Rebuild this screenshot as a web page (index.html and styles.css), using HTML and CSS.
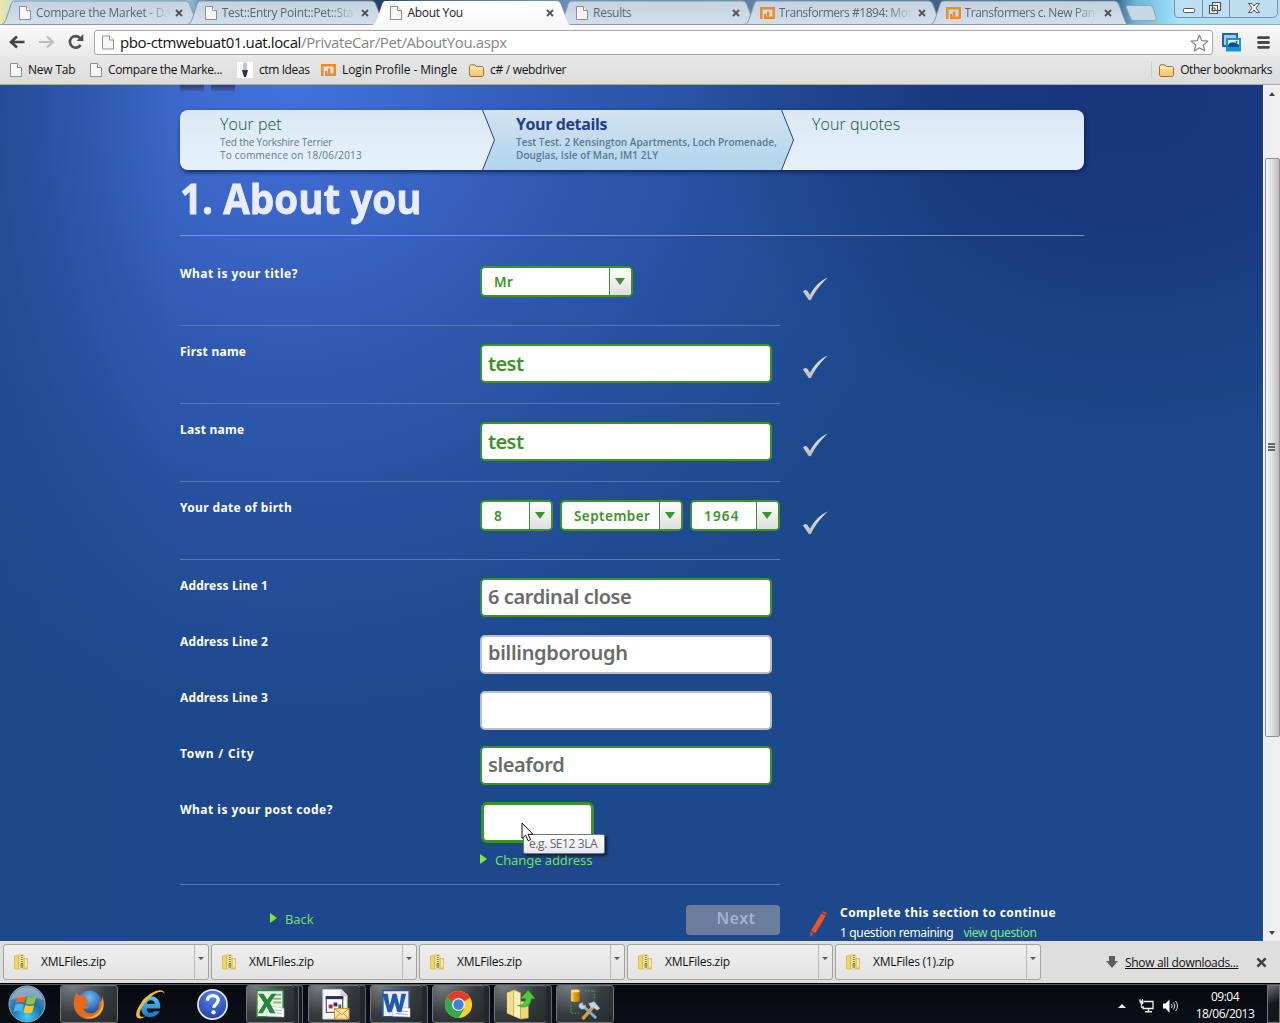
FILE: index.html
```html
<!DOCTYPE html>
<html lang="en">
<head>
<meta charset="utf-8">
<title>About You</title>
<link rel="stylesheet" href="styles.css">
</head>
<body>
<svg class="defs" width="0" height="0" aria-hidden="true">
  <defs>
    <linearGradient id="gTab" x1="0" y1="0" x2="0" y2="1"><stop offset="0" stop-color="#c3d3e3"/><stop offset="1" stop-color="#d3dfe9"/></linearGradient>
    <linearGradient id="gActive" x1="0" y1="0" x2="0" y2="1"><stop offset="0" stop-color="#fff"/><stop offset="1" stop-color="#f8f8f8"/></linearGradient>
    <linearGradient id="gStep" x1="0" y1="0" x2="0" y2="1"><stop offset="0" stop-color="#dbe8f3"/><stop offset="1" stop-color="#e6f2fb"/></linearGradient>
    <linearGradient id="gStepOn" x1="0" y1="0" x2="0" y2="1"><stop offset="0" stop-color="#d3e3f1"/><stop offset="1" stop-color="#b1d4ec"/></linearGradient>
    <linearGradient id="gTick" x1="0" y1="0" x2="0" y2="1"><stop offset="0" stop-color="#e8e8e8"/><stop offset="1" stop-color="#bdbdbd"/></linearGradient>
    <linearGradient id="gFolder" x1="0" y1="0" x2="0" y2="1"><stop offset="0" stop-color="#ffe9ae"/><stop offset="1" stop-color="#f9c464"/></linearGradient>
    <linearGradient id="gGold" x1="0" y1="0" x2="1" y2="0"><stop offset="0" stop-color="#f9dc7c"/><stop offset=".4" stop-color="#e0a21c"/><stop offset="1" stop-color="#b87a08"/></linearGradient>
    <radialGradient id="gOrb" cx=".5" cy=".85" r=".8"><stop offset="0" stop-color="#3fd0f5"/><stop offset=".5" stop-color="#1e6fa8"/><stop offset="1" stop-color="#6d93b0"/></radialGradient>
    <radialGradient id="gHelp" cx=".5" cy=".25" r=".8"><stop offset="0" stop-color="#5d83e0"/><stop offset="1" stop-color="#1d3ea8"/></radialGradient>
    <radialGradient id="gGlobe" cx=".5" cy=".3" r=".7"><stop offset="0" stop-color="#6fc0f0"/><stop offset="1" stop-color="#13439a"/></radialGradient>
    <linearGradient id="gIe" x1="0" y1="0" x2="0" y2="1"><stop offset="0" stop-color="#58c4f8"/><stop offset="1" stop-color="#1277cc"/></linearGradient>
    <symbol id="page" viewBox="0 0 12 14"><path d="M.5.5h7l4 4v9H.5z" fill="#f6f6f6" stroke="#8e8e8e"/><path d="M7.500.5v4h4" fill="#fff" stroke="#8e8e8e"/></symbol>
    <symbol id="mingle" viewBox="0 0 15 12"><path fill="#f28a1e" fill-rule="evenodd" d="M0 0h15v12H6V9.500h6.500v-7h-10V12H0z"/><path d="M4 12V7h2.300v5zM7 4.500h2.300v5H7z" fill="#f28a1e"/></symbol>
    <symbol id="folder" viewBox="0 0 15 13"><path d="M.5 11V2.500L1.500.8h4.500l1.200 1.700h6.300l1 1V11.500l-1 1H1.500z" fill="url(#gFolder)" stroke="#a8702c"/><path d="M1.500 4h12" stroke="#fff2c8"/></symbol>
    <symbol id="close" viewBox="0 0 8 8"><path d="M1 1l6 6M7 1L1 7" stroke="currentColor" stroke-width="1.900"/></symbol>
    <symbol id="tick" viewBox="0 0 26 24"><path d="M0 14.500c1.200-1.700 2.600-2 4.200-.8l2.800 4C11 10.500 17.500 3 25 .5 18.500 5.800 12.500 13.800 8.300 22.200c-.8 1.200-2.300 1.200-2.900.2z" fill="url(#gTick)"/></symbol>
    <symbol id="zip" viewBox="0 0 15 16"><path d="M.5 2L5 1v14H.5z" fill="#f0d667" stroke="#c9a738" stroke-width=".6"/><path d="M5 1h5v14H5z" fill="#f9eda5" stroke="#d2b650" stroke-width=".6"/><path d="M10 4.500h3.500V15H10z" fill="#f3da6e" stroke="#c9a738" stroke-width=".6"/><path d="M7.800 1v9" stroke="#777" stroke-width="2" stroke-dasharray="1 1"/><path d="M6.800 10h2v3.500h-2z" fill="#aaa" stroke="#777" stroke-width=".6"/><path d="M12 6v6" stroke="#fff" stroke-width="1"/></symbol>
    <symbol id="inactiveTab" viewBox="0 0 198 25"><path d="M.5 24.500C3.500 23.500 4.500 21 5.500 18L9.500 6C10.500 2.500 11.500 1 14 1h170c3 0 4 1.500 5 4l5.500 14.500c1 3 2 4.500 3 5z" fill="url(#gTab)" stroke="#8799aa"/></symbol>
    <symbol id="activeTab" viewBox="0 0 198 25"><path d="M0 25c3-1 4.500-4 5.500-7L9.500 6C10.500 2.500 11.500 1 14 1h170c3 0 4 1.500 5 4l5.500 14.500c1 3 2 5 3.500 5.500z" fill="url(#gActive)"/></symbol>
  </defs>
</svg>
<div class="screen">
  <header class="tabstrip">
    <div class="tab"><svg class="shape"><use href="#inactiveTab"/></svg><svg class="ico"><use href="#page"/></svg><span class="name fade">Compare the Market - Da</span><svg class="x"><use href="#close"/></svg></div>
    <div class="tab"><svg class="shape"><use href="#inactiveTab"/></svg><svg class="ico"><use href="#page"/></svg><span class="name fade">Test::Entry Point::Pet::Sta</span><svg class="x"><use href="#close"/></svg></div>
    <div class="tab active"><svg class="shape"><use href="#activeTab"/></svg><svg class="ico"><use href="#page"/></svg><span class="name">About You</span><svg class="x"><use href="#close"/></svg></div>
    <div class="tab"><svg class="shape"><use href="#inactiveTab"/></svg><svg class="ico"><use href="#page"/></svg><span class="name">Results</span><svg class="x"><use href="#close"/></svg></div>
    <div class="tab"><svg class="shape"><use href="#inactiveTab"/></svg><svg class="ico wide"><use href="#mingle"/></svg><span class="name fade tight">Transformers #1894: Mor</span><svg class="x"><use href="#close"/></svg></div>
    <div class="tab"><svg class="shape"><use href="#inactiveTab"/></svg><svg class="ico wide"><use href="#mingle"/></svg><span class="name fade tight">Transformers c. New Pan</span><svg class="x"><use href="#close"/></svg></div>
    <svg class="newtab" viewBox="0 0 32 16"><path d="M3.500.5h21c2 0 3 1 3.500 2.500l3 9.500c.5 2-.5 3-2 3H9c-2 0-3-1-3.500-2.500L1.500 3C1 1.500 2 .5 3.500.5z" fill="#c5d8e4" stroke="#8ba6b8"/></svg>
    <div class="winbtns">
      <svg viewBox="0 0 104 18"><path d="M.5 0v13c0 3 1.500 4.500 4 4.500h94c3 0 5-2 5-4.500V0M28.500 0v17M55.500 0v17" fill="none" stroke="#7891a5"/><rect x="9.500" y="8.500" width="11" height="4" rx="1" fill="#fff" stroke="#4c5866"/><path d="M38.500 2.500h8v8h-8zM35.500 5.500h8v8h-8z" fill="#fff" stroke="#4c5866" stroke-width="1.200"/><path d="M38 8h3v3h-3z" fill="none" stroke="#4c5866"/><path d="M74.500 3.500h3.500l2 2.500 2-2.500h3.500l-3.600 4.500 3.600 4.500H82l-2-2.500-2 2.500h-3.500L78.100 8z" fill="#fff" stroke="#4c5866"/></svg>
    </div>
  </header>
  <div class="toolbar">
    <svg class="nav back" viewBox="0 0 16 14"><path d="M15.500 7H3M8 1.500L2 7l6 5.500" fill="none" stroke="#444" stroke-width="2.600"/></svg>
    <svg class="nav fwd" viewBox="0 0 16 14"><path d="M0 7h12M8 1.500L14 7l-6 5.500" fill="none" stroke="#bcbcbc" stroke-width="2.200"/></svg>
    <svg class="nav reload" viewBox="0 0 16 16"><path d="M12.600 11A5.800 5.800 0 1 1 12 4" fill="none" stroke="#505050" stroke-width="2.600"/><path d="M15.300 0v7H8.500z" fill="#505050"/></svg>
    <div class="omnibox">
      <svg class="doc"><use href="#page"/></svg>
      <span class="url"><b>pbo-ctmwebuat01.uat.local</b>/PrivateCar/Pet/AboutYou.aspx</span>
      <svg class="star" viewBox="0 0 19 18"><path d="M9.500 1.200l2.300 5.500 6 .5-4.500 3.900 1.400 5.900-5.200-3.200L4.300 17l1.400-5.900L1.200 7.200l6-.5z" fill="#fff" stroke="#858585" stroke-width="1.200" stroke-linejoin="round"/></svg>
    </div>
    <svg class="ext" viewBox="0 0 20 19"><rect x="1" y="1" width="14" height="12" fill="#a9cbe1" stroke="#1e679b" stroke-width="2"/><rect x="4" y="5" width="15" height="13.500" fill="#1794d8"/><path d="M6 7h11v7H6z" fill="#d6ecfa"/><path d="M6 14v-2c3-4 7-3 11 0v2z" fill="#075384"/><circle cx="14.500" cy="9" r="1" fill="#075384"/></svg>
    <svg class="menu" viewBox="0 0 13 13"><path d="M1.500 1.700h10M1.500 6.500h10M1.500 11.300h10" stroke="#484848" stroke-width="2.800" stroke-linecap="round"/></svg>
  </div>
  <div class="bookmarks">
    <div class="bm b1"><svg class="pg"><use href="#page"/></svg><span>New Tab</span></div>
    <div class="bm b2"><svg class="pg"><use href="#page"/></svg><span>Compare the Marke...</span></div>
    <div class="bm b3"><svg class="fav" viewBox="0 0 16 16"><path d="M0 0h16v16H0z" fill="#fff"/><path d="M6 1c1-1 3-1 4 0v8H6z" fill="#b9c4d4"/><path d="M5 8h6l-1 4-1 3H7l-1-3z" fill="#25345c"/></svg><span>ctm Ideas</span></div>
    <div class="bm b4"><svg class="mg"><use href="#mingle"/></svg><span>Login Profile - Mingle</span></div>
    <div class="bm b5"><svg class="fd"><use href="#folder"/></svg><span>c# / webdriver</span></div>
    <div class="bm other"><svg class="fd"><use href="#folder"/></svg><span>Other bookmarks</span></div>
  </div>

  <div class="viewport">
    <main class="page">
      <div class="logo"><i></i><i></i></div>
      <div class="steps">
        <svg class="stepsbg" viewBox="0 0 904 60"><rect width="904" height="60" rx="8" fill="url(#gStep)"/><path d="M302.500 0H601.500L613.500 30 601.500 60H302.500L314.500 30z" fill="url(#gStepOn)"/><path d="M302.500 0l12 30-12 30M601.500 0l12 30-12 30" fill="none" stroke="#2c3f78" stroke-width="1"/></svg>
        <div class="step"><h2>Your pet</h2><p><span class="p1">Ted the Yorkshire Terrier</span><br><span class="p2">To commence on 18/06/2013</span></p></div>
        <div class="step on"><h2>Your details</h2><p><span>Test Test. 2 Kensington Apartments, Loch Promenade,</span><br><span class="p4">Douglas, Isle of Man, IM1 2LY</span></p></div>
        <div class="step last"><h2>Your quotes</h2></div>
      </div>
      <h1><span>1. About you</span></h1>

      <section class="question first">
        <label class="wide">What is your title?</label>
        <div class="selects"><div class="select w153"><span>Mr</span><i></i></div></div>
        <svg class="tick"><use href="#tick"/></svg>
      </section>
      <section class="question">
        <label>First name</label>
        <div class="input ok done">test</div>
        <svg class="tick"><use href="#tick"/></svg>
      </section>
      <section class="question">
        <label>Last name</label>
        <div class="input ok done">test</div>
        <svg class="tick"><use href="#tick"/></svg>
      </section>
      <section class="question">
        <label class="dob">Your date of birth</label>
        <div class="selects"><div class="select w73"><span>8</span><i></i></div><div class="select w123"><span>September</span><i></i></div><div class="select w90"><span class="year">1964</span><i></i></div></div>
        <svg class="tick"><use href="#tick"/></svg>
      </section>
      <section class="address">
        <div class="line"><label class="al">Address Line 1</label><div class="input ok">6 cardinal close</div></div>
        <div class="line"><label class="al">Address Line 2</label><div class="input plain">billingborough</div></div>
        <div class="line"><label class="al">Address Line 3</label><div class="input plain"></div></div>
        <div class="line"><label class="town">Town / City</label><div class="input ok">sleaford</div></div>
        <div class="line post"><label class="wide">What is your post code?</label>
          <div class="postfield">
            <div class="postcode"></div>
            <a class="link change"><i></i><span>Change address</span></a>
            <div class="tooltip">e.g. SE12 3LA</div>
            <svg class="cursor" viewBox="0 0 13 20"><path d="M1 1v15.500l3.600-3.300 2.500 5.600 2.500-1.100-2.500-5.400H12z" fill="#fff" stroke="#111"/></svg>
          </div>
        </div>
      </section>
      <div class="actions">
        <a class="link backlink"><i></i><span>Back</span></a>
        <button class="next" type="button">Next</button>
        <svg class="pencil" viewBox="0 0 18 26"><path d="M12.300 2.500l4.500 2.300L6.500 22l-4.500-2.500z" fill="#f0522b"/><path d="M13 1.600L14 .3l3.700 1.500-.5 2zM1.500 20.700l3.500 2-4.300 3z" fill="#d9482a"/></svg>
        <div class="remain"><strong>Complete this section to continue</strong><p><span>1 question remaining</span><a>view question</a></p></div>
      </div>
    </main>
    <div class="scrollbar"><i class="up"></i><div class="thumb"><i></i><i></i><i></i></div><i class="down"></i></div>
  </div>

  <div class="downloads">
    <div class="dl"><svg class="zip"><use href="#zip"/></svg><span>XMLFiles.zip</span><b></b></div>
    <div class="dl"><svg class="zip"><use href="#zip"/></svg><span>XMLFiles.zip</span><b></b></div>
    <div class="dl"><svg class="zip"><use href="#zip"/></svg><span>XMLFiles.zip</span><b></b></div>
    <div class="dl"><svg class="zip"><use href="#zip"/></svg><span>XMLFiles.zip</span><b></b></div>
    <div class="dl"><svg class="zip"><use href="#zip"/></svg><span>XMLFiles (1).zip</span><b></b></div>
    <svg class="dlarrow" viewBox="0 0 12 12"><path d="M3 0h6v5h3l-6 7-6-7h3z" fill="#5c5c5c"/></svg>
    <a class="showall">Show all downloads...</a>
    <svg class="dlclose"><use href="#close"/></svg>
  </div>

  <footer class="taskbar">
    <div class="task start"><svg viewBox="0 0 38 38"><circle cx="19" cy="19" r="18" fill="url(#gOrb)" stroke="#8fb4c9"/><path d="M9.500 11.500c3-2 6-1.800 8.500-.5l-1.800 7c-3-1.300-5.500-1.200-8.500.3z" fill="#f0612a"/><path d="M19.500 11.500c3 1.300 5.500 1.300 8.800-.3l-1.900 7.300c-3 1.500-5.800 1.400-8.700.1z" fill="#8fc63f"/><path d="M7.300 19.700c3-1.500 5.800-1.500 8.500-.2L14 26.800c-3-1.300-5.500-1.300-8.500.3z" fill="#4cb4ea"/><path d="M17.300 20c3 1.400 5.800 1.400 8.700 0l-1.900 7.200c-3 1.500-5.800 1.400-8.600.1z" fill="#fcc928"/><path d="M3 15A16.500 16.500 0 0 1 35 15Q19 8 3 15z" fill="#fff" opacity=".28"/></svg></div>
    <div class="task open"><svg viewBox="0 0 34 34"><circle cx="18" cy="15" r="12.500" fill="url(#gGlobe)"/><path d="M5 5c-4 6-4.500 14-.5 20C9 32 18 34 25 30c8-5 9.500-14 6-22 0 4-1 6-3 7 1 7-4 12-10 11-4-.5-6-3-6.500-5 3 1 5 0 6.500-2-3-.2-4.500-1-5-3 1-1 3.500-.8 4.500-2.500-2-.8-3.500-2-3-4.500L9.500 8C7 7.500 5.500 7 5 5z" fill="#e8691b"/><path d="M11 29c6 3 13 0 17-5 3-4 4-9 3-14 3 8 1 15-5 19-5 3-10 3-15 0z" fill="#fbb62c"/></svg></div>
    <div class="task ie"><svg viewBox="0 0 34 34"><path d="M26.500 24c-2 4-5.500 6-9.700 6C10.500 30 7 25.500 7 19.500 7 13 11 8.500 17 8.500c7 0 10.500 5 10 12.500H13c.2 3 1.600 4.600 4.200 4.600 1.500 0 2.700-.6 3.300-1.600zm-5-7.500c-.2-2.600-1.600-4-4-4s-4 1.400-4.400 4z" fill="url(#gIe)"/><path d="M31.500 6.500C31.500-.5 20 1.500 11 11 3 19.500 0 29 4 31c2 1 5 0 8-2-4 1.500-7 1-6-4 1.500-6.500 8.500-15 15.500-19 5-3 9-3 10 .5z" fill="#f2bd2c"/></svg></div>
    <div class="task"><svg viewBox="0 0 34 34"><circle cx="17" cy="17" r="15" fill="url(#gHelp)" stroke="#dfe5f3" stroke-width="1.800"/><path d="M11.700 13c.3-3.300 2.400-5.200 5.600-5.200 3.300 0 5.500 1.900 5.500 4.700 0 4-4.500 4.400-4.500 7.900" fill="none" stroke="#fff" stroke-width="3.400"/><circle cx="18" cy="25" r="2.200" fill="#fff"/></svg></div>
    <div class="task open stack2"><svg viewBox="0 0 34 34"><path d="M3 2.500h27v27H3z" fill="#eaf5e6" stroke="#2e8b3d" stroke-width="1.500"/><path d="M20 7h8M20 11h8M20 15h8" stroke="#84bb84" stroke-width="2"/><path d="M14 18l17 3v9l-18-1z" fill="#fff" stroke="#aaa" stroke-width=".5"/><path d="M16 22l13 1.500M16 25l13 1.500" stroke="#9fc49f"/><path d="M4 6h6l3.500 6L18 6h5l-6.500 9.500L22 26h-5.500L13 19l-4 7H4l6.500-10.500z" fill="#28863a"/></svg></div>
    <div class="task open stack1"><svg viewBox="0 0 34 34"><path d="M5 1.500h19l6 6V32H5z" fill="#f7f7f7" stroke="#ccc"/><path d="M24 1.500v6h6" fill="#ddd" stroke="#bbb"/><rect x="8.500" y="9" width="17" height="16" fill="#fff" stroke="#26336b"/><path d="M8 8.500h18v3H8z" fill="#26336b"/><path d="M11 17h4v4h-4z" fill="#c23"/><path d="M16 15h4v4h-4z" fill="#2a2d8d"/><path d="M21 17h3v4h-3z" fill="#282"/><path d="M17 21h15v11H17z" fill="#f9e2a0" stroke="#c58f2c"/><path d="M17 21l7.500 6.500L32 21M17 32l6-6M32 32l-6-6" fill="none" stroke="#c58f2c"/></svg></div>
    <div class="task open stack1"><svg viewBox="0 0 34 34"><path d="M3 2.500h27v27H3z" fill="#e6eefb" stroke="#2b579a" stroke-width="1.500"/><path d="M14 18l17 3v9l-18-1z" fill="#fff" stroke="#aaa" stroke-width=".5"/><path d="M16 23l13 1.500M16 26l13 1.500" stroke="#9ab"/><path d="M2.500 6H8l2 12 3-12h4l3 12L22 6h5l-5 19h-4l-3-10-3 10H8z" fill="#2257ad"/></svg></div>
    <div class="task open stack1"><svg viewBox="0 0 34 34"><circle cx="17" cy="17" r="14" fill="#fbcf2b"/><path d="M17 17L4.900 10A14 14 0 0 0 17 31l6-10z" fill="#35a853"/><path d="M17 17L4.900 10A14 14 0 0 1 29.100 10z" fill="#e33b2e"/><circle cx="17" cy="17" r="6.700" fill="#f4f4f4"/><circle cx="17" cy="17" r="5.300" fill="#3f7fd6"/></svg></div>
    <div class="task open stack1"><svg viewBox="0 0 34 34"><path d="M3 5l7-3v27l-7-3z" fill="#f1dd8c"/><path d="M10 2l7 3v27l-7-3z" fill="#fbf0ba" stroke="#c9ac4a" stroke-width=".6"/><path d="M17 14h8v17l-8 1z" fill="#efd67c" stroke="#c9ac4a" stroke-width=".6"/><path d="M14 18c6 0 8-3 8-7h-5l8-9 7 9h-4c0 7-6 11-14 7z" fill="#4ccb3e" stroke="#23902b" stroke-width=".6"/></svg></div>
    <div class="task open"><svg viewBox="0 0 34 34"><path d="M3 3v10c0 2 9 2 9 0V3z" fill="url(#gGold)"/><ellipse cx="7.500" cy="3" rx="4.500" ry="1.500" fill="#fbe08d"/><path d="M18 3h9v10M3 18v8h9" fill="none" stroke="#37b53b" stroke-width="1.200" stroke-dasharray="1.500 1.500"/><path d="M15 32l12-14" stroke="#d69c38" stroke-width="3.500"/><path d="M15 18l14 13" stroke="#8ca8c8" stroke-width="3"/><path d="M12 16l3-1 .5 3 3-.5-1 4-4 .5-2.500-3zM21 16l6-2 6 7-3 2-4-3-2 1z" fill="#c7d3e2" stroke="#7890ad" stroke-width=".5"/></svg></div>
    <div class="tray">
      <i class="caret"></i>
      <svg class="net" viewBox="0 0 15 14"><path d="M5 2.500h9v7H4V7" fill="none" stroke="#eee" stroke-width="1.300"/><path d="M9.500 10v2.500M6 12.800h7" stroke="#eee" stroke-width="1.500"/><path d="M0 1.500h4.500v3L2.300 6z" fill="#eee"/><path d="M1 0v2M3.500 0v2M2.300 5v3.500h2" fill="none" stroke="#eee"/></svg>
      <svg class="vol" viewBox="0 0 15 14"><path d="M0 4.500h2.500L6.500.5v13L2.500 9.500H0z" fill="#fff"/><path d="M8.500 5q1.500 2 0 4M10.500 3.500q2.700 3.500 0 7M12.500 2q4 5 0 10" fill="none" stroke="#ddd"/></svg>
      <div class="clock"><span>09:04</span><span>18/06/2013</span></div>
      <div class="peek"></div>
    </div>
  </footer>
</div>
</body>
</html>
```
FILE: styles.css
```css
* { box-sizing: border-box; }
body { margin: 0; overflow: hidden; font: 12px "Open Sans", "Noto Sans", sans-serif; color: #111; }
.defs { position: absolute; }
.screen { width: 1280px; height: 1023px; display: flex; flex-direction: column; overflow: hidden; white-space: nowrap; }
svg { display: block; flex: none; }
i { display: block; flex: none; }
h1, h2, p { margin: 0; }

/* Tab strip */
.tabstrip { height: 25px; display: flex; position: relative; padding-left: 1px; border-bottom: 1px solid #9aa6b0;
  background: linear-gradient(90deg, #f2e7a0 0, #b5dcea 16px, #8fbad0 190px, #4d6f96 210px, #27415f 380px, #53779c 440px, #6d8fb5 560px, #5f7fa3 760px, #3f6288 940px, #2d4a70 1110px, #6ab4dc 1135px, #a4e6fa 1180px, #b9dcf2 1280px); }
.tab { width: 198px; margin-right: -12.300px; height: 25px; flex: none; position: relative; display: flex; align-items: center; padding-left: 18px; color: #5b6772; }
.tab.active { z-index: 2; color: #222; }
.shape { position: absolute; left: 0; top: 0; width: 198px; height: 25px; }
.ico { position: relative; width: 12px; height: 14px; margin-right: 5px; }
.ico.wide { width: 15px; height: 12px; margin: 0 4px 0 -2px; }
.name { position: relative; width: 134px; letter-spacing: -.3px; }
.tight { letter-spacing: -.45px; }
.fade { -webkit-mask-image: linear-gradient(90deg, #000 108px, transparent 134px); mask-image: linear-gradient(90deg, #000 108px, transparent 134px); }
.tab .x { position: relative; width: 8px; height: 8px; margin-left: 5px; color: #555; }
.newtab { width: 32px; height: 16px; margin: 5px 0 0 10px; }
.winbtns { position: absolute; left: 1174px; top: 0; width: 104px; height: 18px; background: #c4ddedaa; border-radius: 0 0 5px 5px; }
.winbtns svg { width: 104px; height: 18px; }

/* Toolbar */
.toolbar { height: 32px; display: flex; align-items: center; padding-left: 9px; background: linear-gradient(#f9f9f9, #e9e9e9); }
.nav { margin-top: 2px; }
.back, .fwd { width: 16px; height: 14px; }
.fwd { margin-left: 14px; }
.reload { width: 16px; height: 16px; margin-left: 13px; }
.omnibox { width: 1119px; height: 25px; margin: 3px 0 0 10px; border: 1px solid #a5a5a5; border-radius: 3px; background: #fff; display: flex; align-items: center; padding: 0 3px 0 7px; }
.doc { width: 12px; height: 15px; margin-right: 6px; }
.url { flex: 1; font-size: 15px; color: #858585; letter-spacing: -.39px; line-height: 21px; }
.url b { font-weight: 400; color: #111; }
.star { width: 19px; height: 18px; }
.ext { width: 20px; height: 19px; margin: 2px 0 0 9px; }
.menu { width: 13px; height: 13px; margin: 2px 0 0 15px; }

/* Bookmarks bar */
.bookmarks { height: 28px; position: relative; display: flex; align-items: center; padding: 0 8px 1px 10px; border-bottom: 1px solid #a8a8a8; background: linear-gradient(#e7e7e7, #dcdcdc); letter-spacing: -.2px; }
.bm { display: flex; align-items: center; }
.bm span { padding-bottom: 1px; }
.bm svg { margin-right: 6px; }
.pg { width: 12px; height: 14px; }
.fav { width: 16px; height: 16px; }
.mg { width: 15px; height: 12px; }
.fd { width: 15px; height: 13px; }
.b1 { width: 80px; } .b2 { width: 147px; letter-spacing: -.35px; } .b3 { width: 84px; letter-spacing: -.4px; } .b4 { width: 148px; letter-spacing: -.1px; } .b5 { letter-spacing: -.3px; }
.other { margin-left: auto; padding-left: 7px; border-left: 1px solid #cfcfcf; letter-spacing: -.45px; }

/* Web page */
.viewport { height: 856px; display: flex; overflow: hidden;
  background: linear-gradient(90deg, #1c478899 0, #1c478800 170px), radial-gradient(ellipse 430px 360px at 1130px 0, #18347a, #18347acc 35%, #18347a00), radial-gradient(ellipse 660px 640px at 290px 0, #4470dc 0, #3c66c7 20%, #315bb3 40%, #27519f 65%, #1d488b00 100%), #1d488b; }
.page { width: 904px; margin: 0 179px 0 180px; flex: none; color: #fff; }
.logo { height: 25px; display: flex; gap: 7px; }
.logo i { width: 24px; height: 6px; background: linear-gradient(#2d3c66, #2d3c6633); }
.steps { position: relative; height: 60px; display: flex; border-radius: 8px; box-shadow: 1px 2px 4px #0d235e; }
.stepsbg { position: absolute; inset: 0; width: 904px; height: 60px; }
.step { position: relative; width: 296px; padding: 4px 0 0 40px; }
.step h2 { font: 300 16px/21px "Open Sans", sans-serif; color: #10503f; letter-spacing: .05px; }
.step p { font-size: 10px; line-height: 13px; color: #60798f; margin-top: 1px; }
.step.on h2 { font-weight: 700; color: #213e86; letter-spacing: -.4px; }
.step.on p { font-weight: 600; color: #587791; }
.p1 { letter-spacing: -.15px; }
.p2 { letter-spacing: .24px; }
.p4 { letter-spacing: .08px; }
h1 { height: 66px; border-bottom: 1px solid #7b98cc; font: 700 42px/56px "Open Sans", sans-serif; color: #e9ecfa; }
h1 span { display: inline-block; transform: scaleX(.92); transform-origin: 0 0; -webkit-text-stroke: .8px #e9ecfa; }
.question { width: 600px; height: 78px; padding-top: 18px; display: grid; grid-template-columns: 300px 323px 26px; align-items: start; border-bottom: 1px solid #5379b8; }
.question.first { height: 90px; padding-top: 30px; }
label { font: 700 12px/15px "Noto Sans", sans-serif; letter-spacing: .25px; }
label.wide { letter-spacing: .48px; }
label.dob { letter-spacing: .35px; }
label.al { letter-spacing: .13px; }
label.town { letter-spacing: .75px; }
.tick { width: 26px; height: 24px; margin-top: 11px; }
.input { width: 292px; height: 39px; border: 2px solid #b9bdc6; border-radius: 5px; background: #fff; padding-left: 6px; font: 600 20px/34px "Noto Sans", sans-serif; color: #686b68; letter-spacing: -.4px; }
.input.plain { margin-top: 1px; line-height: 32px; letter-spacing: -.3px; }
.input.ok { border-color: #3b9428; }
.input.done { color: #3b9428; line-height: 35px; letter-spacing: -.6px; }
.selects { display: flex; justify-content: space-between; width: 300px; }
.select { height: 31px; display: flex; justify-content: space-between; border: 2px solid #3b9428; border-radius: 5px; background: #fff; overflow: hidden; padding-left: 12px; font: 600 13.500px/28px "Noto Sans", sans-serif; letter-spacing: .45px; color: #3b9428; }
.select .year { letter-spacing: 1.2px; }
.select i { width: 22px; border-left: 1px solid #3b9428; background: linear-gradient(#fff, #dedede); padding: 10px 0 0 5px; }
.select i::after { content: ""; display: block; width: 0; border: 5.500px solid transparent; border-top: 7px solid #3b9428; border-bottom: 0; }
.w153 { width: 153px; } .w73 { width: 73px; } .w123 { width: 123px; } .w90 { width: 90px; }
.address { width: 600px; height: 325px; padding-top: 18px; border-bottom: 1px solid #5379b8; }
.line { height: 56px; display: grid; grid-template-columns: 300px 300px; align-items: start; }
.postfield { position: relative; }
.postcode { width: 113px; height: 41px; margin-left: 1px; border: 3px solid #3b9428; border-radius: 6px; background: #fff; }
.link { display: flex; align-items: center; color: #74dc62; font: 13px/18px "Noto Sans", sans-serif; letter-spacing: -.08px; }
.link i { border: 5px solid transparent; border-left: 7px solid #84e62f; border-right: 0; margin: -3px 8px 0 0; }
.change { margin-top: 8px; }
.tooltip { position: absolute; left: 43px; top: 32px; width: 82px; height: 20px; border: 1px solid #777; border-radius: 2px; background: linear-gradient(#fff, #e5e6f0); box-shadow: 2px 2px 3px #0009; color: #666; font-size: 12px; line-height: 18px; padding-left: 5px; letter-spacing: -.4px; }
.cursor { position: absolute; left: 41px; top: 20px; width: 13px; height: 20px; }
.actions { height: 60px; width: 904px; display: flex; align-items: flex-start; }
.backlink { margin: 25px 0 0 90px; width: 416px; }
.next { width: 94px; height: 30px; margin-top: 20px; padding: 0 0 5px 6px; border: 0; border-radius: 4px; background: #6a7d9c; color: #a3b3d3; font: 600 16px "Noto Sans", sans-serif; letter-spacing: .5px; }
.pencil { width: 18px; height: 26px; margin: 26px 0 0 29px; }
.remain { margin: 18px 0 0 13px; font: 12px/20px "Noto Sans", sans-serif; }
.remain strong { display: block; letter-spacing: .43px; }
.remain p { letter-spacing: -.35px; }
.remain a { color: #86e389; margin-left: 10px; }
.scrollbar { width: 17px; height: 856px; background: #efefef; border-left: 1px solid #fff; display: flex; flex-direction: column; align-items: center; }
.up, .down { border: 3.500px solid transparent; }
.up { border-bottom: 4px solid #444; border-top: 0; margin: 7px 0 62px; }
.down { border-top: 4px solid #444; border-bottom: 0; margin-top: 194px; }
.thumb { width: 15px; height: 579px; border: 1px solid #8f9094; border-radius: 2px; background: linear-gradient(90deg, #f7f7f7, #e2e2e4 45%, #b9b9bc); display: flex; flex-direction: column; align-items: center; justify-content: center; gap: 1px; padding: 0 2px 2px 0; }
.thumb i { width: 7px; height: 2px; background: #666; }

/* Downloads shelf */
.downloads { height: 43px; padding: 3px 0 0 3px; display: flex; align-items: flex-start; gap: 2px; background: #dedede; }
.dl { width: 206px; height: 36px; flex: none; display: flex; align-items: center; padding-left: 10px; border: 1px solid #a3a3a3; border-radius: 3px; background: linear-gradient(#eee, #e3e3e3); letter-spacing: -.25px; }
.dl span { padding-bottom: 1px; }
.zip { width: 15px; height: 16px; margin-right: 12px; }
.dl b { margin-left: auto; width: 14px; height: 34px; border-left: 1px solid #bbb; padding: 12px 0 0 3px; }
.dl b::after { content: ""; display: block; width: 0; border: 3px solid transparent; border-top-color: #555; border-bottom: 0; }
.dlarrow { width: 12px; height: 12px; margin: 12px 5px 0 63px; }
.showall { text-decoration: underline; line-height: 37px; letter-spacing: -.32px; width: 114px; }
.dlclose { width: 11px; height: 11px; margin: 13px 0 0 15px; color: #444; }

/* Taskbar */
.taskbar { height: 39px; display: flex; align-items: center; border-top: 1px solid #50565c; box-shadow: 0 -1px #000; background: linear-gradient(#060a0e, #0b0f18); position: relative; }
.task { width: 58px; height: 38px; margin-right: 4px; flex: none; display: flex; align-items: center; justify-content: center; }
.task svg { width: 33px; height: 33px; margin-right: 1px; }
.start { width: 56px; }
.task.start svg { width: 38px; height: 38px; margin-right: 2px; }
.task.open { border: 1px solid #72777b; border-radius: 3px; background: radial-gradient(ellipse at 20% 0, #777c80, #363b3e 55%, #23282b); }
.stack1, .stack2 { position: relative; }
.task.stack1, .task.stack2 { width: 53px; margin-right: 9px; }
.stack1::after, .stack2::after { content: ""; position: absolute; right: -6px; top: -1px; width: 5px; height: 38px; border: 1px solid #5f6468; border-left: 0; border-radius: 0 3px 3px 0; background: #22272a; }
.task.stack2 { width: 49px; margin-right: 13px; }
.stack2::after { right: -9px; width: 8px; box-shadow: inset -3px 0 #15191c, inset -4px 0 #5f6468; }
.tray { margin-left: auto; display: flex; align-items: center; height: 38px; color: #fff; }
.caret { border: 4px solid transparent; border-bottom: 4px solid #eee; border-top: 0; margin: 3px 13px 0 0; }
.net { width: 15px; height: 14px; margin: 4px 9px 0 0; }
.vol { width: 15px; height: 14px; margin: 4px 17px 0 0; }
.clock { width: 60px; display: flex; flex-direction: column; align-items: center; line-height: 17px; letter-spacing: -.5px; padding-top: 2px; margin-right: 12px; }
.peek { width: 13px; height: 38px; border: 1px solid #777; background: linear-gradient(150deg, #6a6e72, #15191c 50%); }
```
